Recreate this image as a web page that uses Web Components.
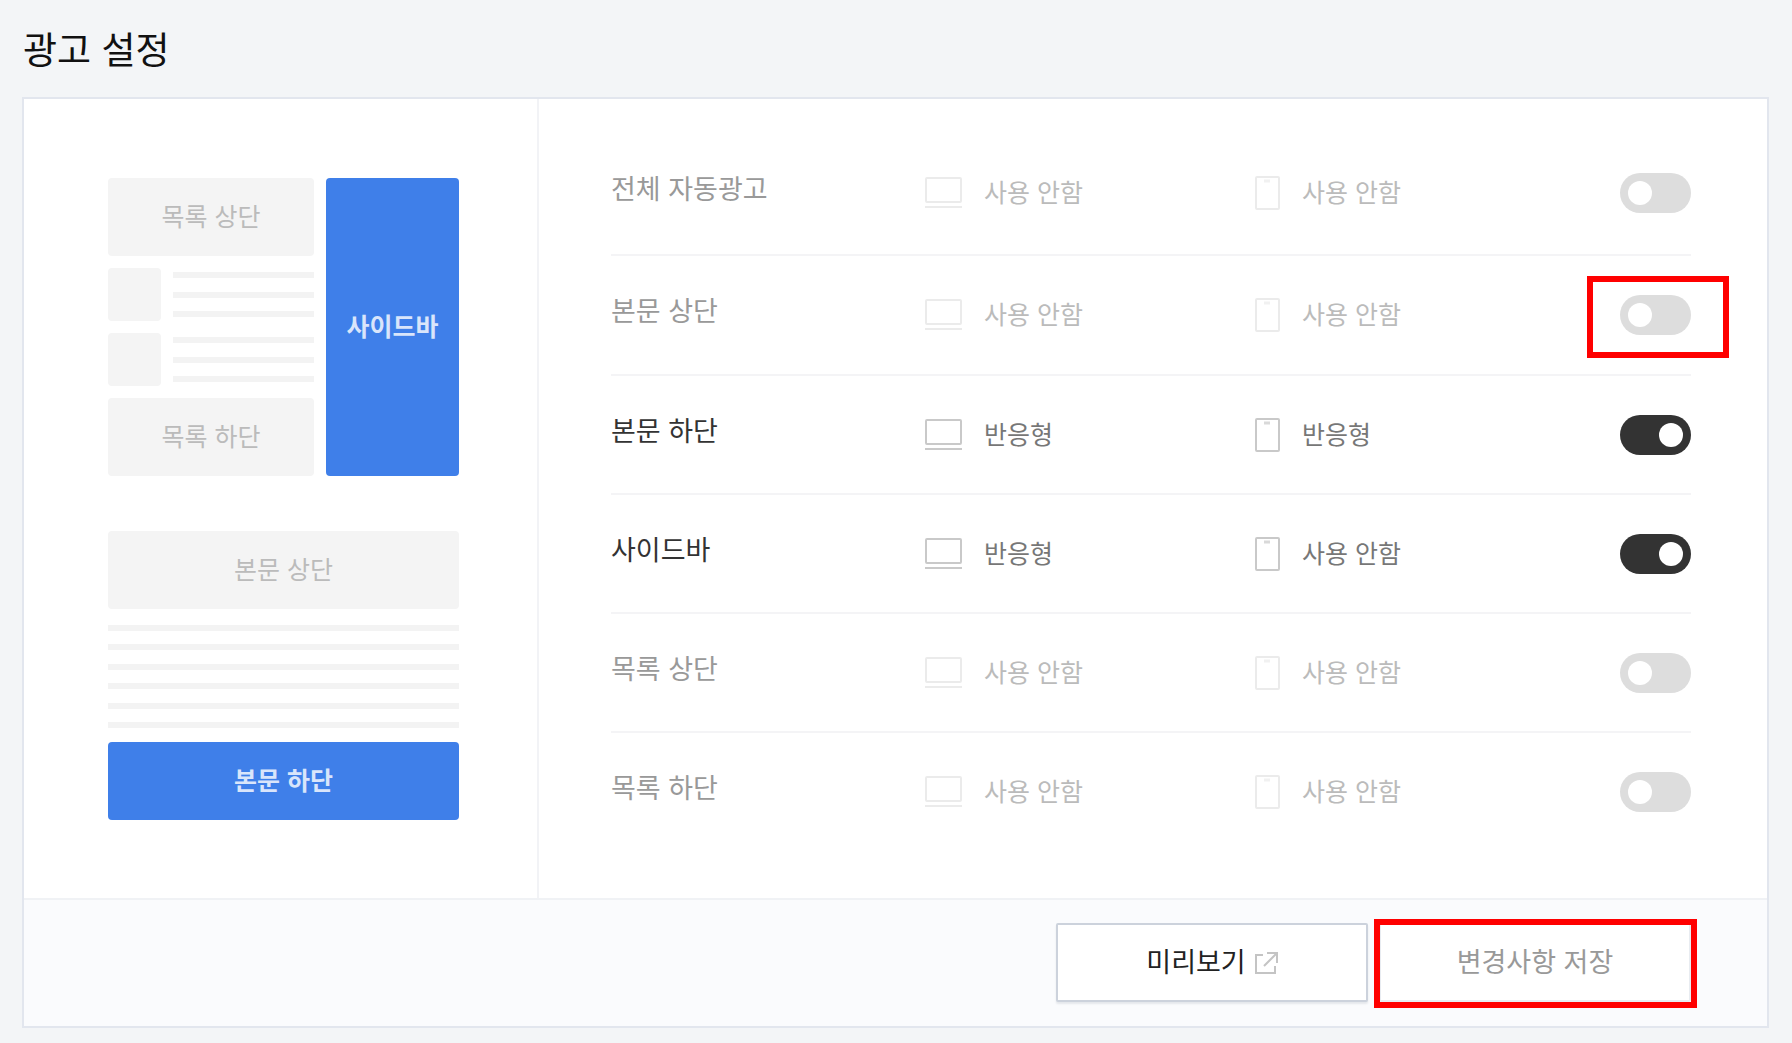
<!DOCTYPE html>
<html lang="ko">
<head>
<meta charset="utf-8">
<title>광고 설정</title>
<style>
  html { background: #f3f5f7; }
  body { margin: 0; font-family: "Noto Sans CJK KR", "Noto Sans", sans-serif; color: #111; }
</style>
</head>
<body>
<ad-settings></ad-settings>
<script>
const define = (name, html, setup) => {
  const template = document.createElement('template');
  template.innerHTML = html;
  customElements.define(name, class extends HTMLElement {
    constructor() {
      super();
      this.attachShadow({ mode: 'open' }).append(template.content.cloneNode(true));
    }
    connectedCallback() { if (setup) setup(this, this.shadowRoot); }
  });
};

/* Red callout frame drawn over the control it surrounds */
define('call-out', `
  <style>
    :host { display: block; position: relative; }
    :host::after { content: ""; position: absolute; inset: var(--frame); border: 6px solid #f00; pointer-events: none; }
  </style>
  <slot></slot>`);

define('toggle-switch', `
  <style>
    :host { display: block; }
    input {
      appearance: none; display: flex; align-items: center; box-sizing: border-box;
      width: 71px; height: 40px; margin: 0; padding: 0 8px; border-radius: 20px;
      background: #ddd; cursor: pointer;
    }
    input::before { content: ""; width: 24px; height: 24px; border-radius: 50%; background: #fff; }
    input:checked { background: #333; justify-content: flex-end; }
  </style>
  <input type="checkbox" role="switch">`, (el, root) => {
  const input = root.querySelector('input');
  input.checked = el.hasAttribute('checked');
  input.setAttribute('aria-label', el.getAttribute('label'));
});

define('device-value', `
  <style>
    :host { display: flex; align-items: center; gap: 22px; font-size: 25px; line-height: 36px; white-space: nowrap; }
    span { padding-bottom: 4px; }
    svg { display: none; flex: none; fill: none; stroke: var(--icon); stroke-width: 2; }
    :host([device="pc"]) .pc, :host([device="mobile"]) .mobile { display: block; }
  </style>
  <svg class="pc" width="37" height="34" viewBox="0 0 37 34"><rect x="1" y="2" width="35" height="24" rx="1"/><path d="M0 31h37"/></svg>
  <svg class="mobile" width="25" height="34" viewBox="0 0 25 34"><rect x="1" y="1" width="23" height="32" rx="1"/><path d="M9 5h6" stroke-width="3" opacity=".7"/></svg>
  <span><slot></slot></span>`);

define('ad-row', `
  <style>
    :host {
      display: grid; grid-template-columns: 314fr 330fr 365fr 71px; align-items: center;
      box-sizing: border-box; border-bottom: 2px solid #f4f4f6; color: #bbb; --icon: #ebebeb;
    }
    :host(:last-child) { border-bottom-color: transparent; }
    :host([on]) { color: #777; --icon: #c9c9c9; }
    .name { padding-bottom: 10px; font-size: 27px; line-height: 40px; color: #999; }
    :host([on]) .name { color: #333; }
  </style>
  <div class="name"><slot></slot></div>
  <slot name="pc"></slot>
  <slot name="mobile"></slot>
  <slot name="toggle"></slot>`);

define('ad-list', `
  <style>:host { display: grid; grid-template-rows: 124px 120px repeat(4, 119px); }</style>
  <slot></slot>`);

define('ad-slot', `
  <style>
    :host {
      display: flex; align-items: center; justify-content: center; box-sizing: border-box;
      min-height: 78px; padding-bottom: 4px; border-radius: 4px; background: #f4f4f4; color: #bbb;
      font-size: 25px; line-height: 36px; white-space: nowrap;
    }
    :host([active]) { background: #3f7fe9; color: #d9e5fb; font-weight: 700; }
  </style>
  <slot></slot>`);

define('text-lines', `
  <style>
    :host { display: flex; flex-direction: column; justify-content: space-between; }
    i { height: 6px; background: #f3f3f3; }
  </style>`, (el, root) => {
  for (let n = 0; n < Number(el.getAttribute('count')); n++) root.append(document.createElement('i'));
});

define('page-preview', `
  <style>
    :host { display: flex; flex-direction: column; gap: 55px; }
    .home { display: grid; grid-template-columns: 1fr 133px; gap: 12px; }
    .feed { display: flex; flex-direction: column; gap: 12px; }
    .post { display: grid; grid-template-columns: 53px 1fr; gap: 12px; }
    .thumb { height: 53px; border-radius: 4px; background: #f4f4f4; }
    .post text-lines { padding: 4px 0; }
    .article { display: flex; flex-direction: column; }
    .article text-lines { height: 103px; margin: 16px 0 14px; }
  </style>
  <div class="home">
    <div class="feed">
      <ad-slot>목록 상단</ad-slot>
      <div class="post"><div class="thumb"></div><text-lines count="3"></text-lines></div>
      <div class="post"><div class="thumb"></div><text-lines count="3"></text-lines></div>
      <ad-slot>목록 하단</ad-slot>
    </div>
    <ad-slot active>사이드바</ad-slot>
  </div>
  <div class="article">
    <ad-slot>본문 상단</ad-slot>
    <text-lines count="6"></text-lines>
    <ad-slot active>본문 하단</ad-slot>
  </div>`);

define('action-button', `
  <style>
    :host { display: block; }
    button {
      display: flex; align-items: center; justify-content: center; gap: 9px; box-sizing: border-box;
      width: 312px; height: 79px; margin: 0; padding: 0 0 4px; border: 2px solid #ccd2dc; border-radius: 2px;
      background: #fff; box-shadow: 0 2px 2px #e4e7eb; color: #222;
      font: inherit; font-size: 27px; line-height: 40px; cursor: pointer;
    }
    :host([muted]) button { border-color: #e8ecf1; box-shadow: none; color: #999; }
  </style>
  <button type="button"><slot></slot></button>`);

define('link-icon', `
  <style>
    :host { display: block; padding-top: 6px; }
    svg { display: block; fill: none; stroke: #c4c4c4; stroke-width: 2; }
  </style>
  <svg width="23" height="23" viewBox="0 0 23 23"><path d="M8 3H1v18h19v-7M12 1h10v10M21 2L9 14" stroke-linejoin="miter"/></svg>`);

define('ad-settings', `
  <style>
    :host { display: block; padding: 0 23px 16px 22px; }
    h1 { margin: 0; padding: 20px 1px 21px; font-size: 37px; line-height: 56px; font-weight: 400; }
    .card { border: 2px solid #e2e6ee; background: #fff; }
    .main { display: grid; grid-template-columns: 515px 1fr; }
    .preview { padding: 79px 78px 78px 84px; border-right: 2px solid #f2f3f6; }
    ad-list { padding: 33px 76px 45px 72px; }
    footer { display: flex; justify-content: flex-end; gap: 11px; padding: 23px 76px 24px; border-top: 2px solid #f0f2f5; background: #fafbfd; }
    .toggle-mark { --frame: -19px -38px -23px -33px; }
    .save-mark { --frame: -4px -6px -6px -5px; }
  </style>
  <h1>광고 설정</h1>
  <section class="card">
    <div class="main">
      <div class="preview"><page-preview></page-preview></div>
      <ad-list>
        <ad-row>전체 자동광고
          <device-value slot="pc" device="pc">사용 안함</device-value>
          <device-value slot="mobile" device="mobile">사용 안함</device-value>
          <toggle-switch slot="toggle" label="전체 자동광고"></toggle-switch>
        </ad-row>
        <ad-row>본문 상단
          <device-value slot="pc" device="pc">사용 안함</device-value>
          <device-value slot="mobile" device="mobile">사용 안함</device-value>
          <call-out class="toggle-mark" slot="toggle"><toggle-switch label="본문 상단"></toggle-switch></call-out>
        </ad-row>
        <ad-row on>본문 하단
          <device-value slot="pc" device="pc">반응형</device-value>
          <device-value slot="mobile" device="mobile">반응형</device-value>
          <toggle-switch slot="toggle" label="본문 하단" checked></toggle-switch>
        </ad-row>
        <ad-row on>사이드바
          <device-value slot="pc" device="pc">반응형</device-value>
          <device-value slot="mobile" device="mobile">사용 안함</device-value>
          <toggle-switch slot="toggle" label="사이드바" checked></toggle-switch>
        </ad-row>
        <ad-row>목록 상단
          <device-value slot="pc" device="pc">사용 안함</device-value>
          <device-value slot="mobile" device="mobile">사용 안함</device-value>
          <toggle-switch slot="toggle" label="목록 상단"></toggle-switch>
        </ad-row>
        <ad-row>목록 하단
          <device-value slot="pc" device="pc">사용 안함</device-value>
          <device-value slot="mobile" device="mobile">사용 안함</device-value>
          <toggle-switch slot="toggle" label="목록 하단"></toggle-switch>
        </ad-row>
      </ad-list>
    </div>
    <footer>
      <action-button>미리보기<link-icon></link-icon></action-button>
      <call-out class="save-mark"><action-button muted>변경사항 저장</action-button></call-out>
    </footer>
  </section>`);
</script>
</body>
</html>
